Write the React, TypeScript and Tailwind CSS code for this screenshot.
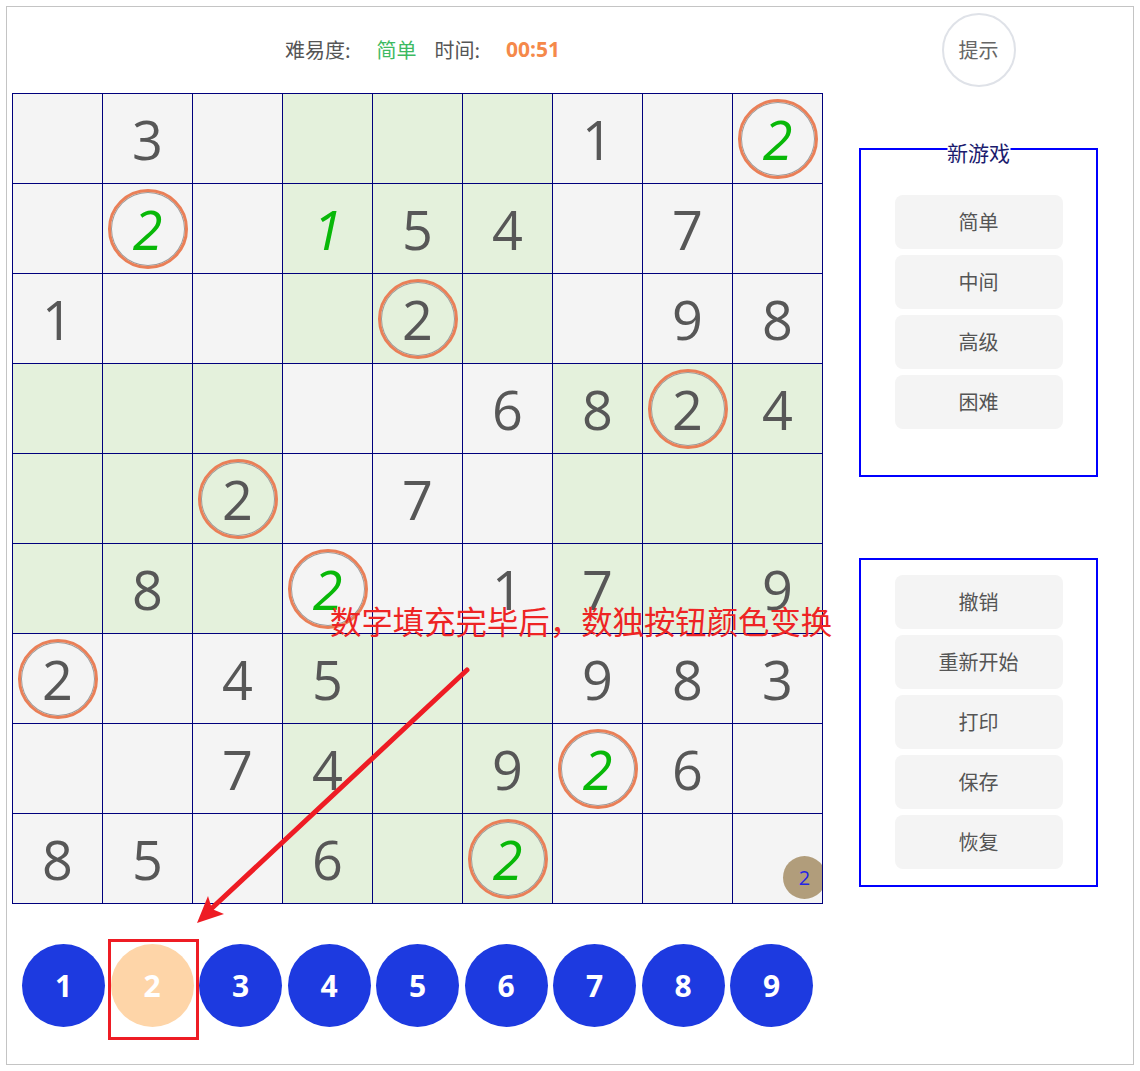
import React from "react"

type Cell = { v?: number; green?: boolean; ring?: boolean }

const rows: Cell[][] = [
  [{}, { v: 3 }, {}, {}, {}, {}, { v: 1 }, {}, { v: 2, green: true, ring: true }],
  [{}, { v: 2, green: true, ring: true }, {}, { v: 1, green: true }, { v: 5 }, { v: 4 }, {}, { v: 7 }, {}],
  [{ v: 1 }, {}, {}, {}, { v: 2, ring: true }, {}, {}, { v: 9 }, { v: 8 }],
  [{}, {}, {}, {}, {}, { v: 6 }, { v: 8 }, { v: 2, ring: true }, { v: 4 }],
  [{}, {}, { v: 2, ring: true }, {}, { v: 7 }, {}, {}, {}, {}],
  [{}, { v: 8 }, {}, { v: 2, green: true, ring: true }, {}, { v: 1 }, { v: 7 }, {}, { v: 9 }],
  [{ v: 2, ring: true }, {}, { v: 4 }, { v: 5 }, {}, {}, { v: 9 }, { v: 8 }, { v: 3 }],
  [{}, {}, { v: 7 }, { v: 4 }, {}, { v: 9 }, { v: 2, green: true, ring: true }, { v: 6 }, {}],
  [{ v: 8 }, { v: 5 }, {}, { v: 6 }, {}, { v: 2, green: true, ring: true }, {}, {}, {}],
]

const cjk = "font-['Noto_Sans_CJK_SC','Noto_Sans',sans-serif]"
const digitFont = "font-['Open_Sans','Noto_Sans',sans-serif]"

export default function App() {
  return (
    <div className="p-[6px] bg-white">
      <div className="relative w-[1128px] h-[1059px] border border-[#c4c4c4] flex pl-[5px] pt-[6px]">
        <div className="w-[811px]">
          <Header />
          <Board />
          <NumberPad />
        </div>
        <Side />
        <Annotation />
      </div>
    </div>
  )
}

function Header() {
  return (
    <div className={`h-[74px] flex items-center justify-center pl-[10px] text-[20px] text-[#555] ${cjk}`}>
      <span>难易度:</span>
      <span className="ml-[26px] text-[#3dba62]">简单</span>
      <span className="ml-[18px]">时间:</span>
      <span className={`ml-[26px] font-bold text-[21px] text-[#f5894a] ${digitFont}`}>00:51</span>
    </div>
  )
}

function Board() {
  return (
    <div className="mt-[6px] w-[811px] border-l border-t border-[#00007c] grid grid-cols-9">
      {rows.map((row, r) =>
        row.map((c, ci) => {
          const green = (Math.floor(r / 3) + Math.floor(ci / 3)) % 2 === 1
          const last = r === 8 && ci === 8
          return (
            <div
              key={`${r}-${ci}`}
              className={`relative overflow-hidden h-[90px] border-r border-b border-[#00007c] flex items-center justify-center ${green ? "bg-[#e4f1dc]" : "bg-[#f4f4f4]"}`}
            >
              {c.ring && (
                <span className="absolute w-[80px] h-[80px] rounded-full border-[3px] border-[#ea7f57] shadow-[inset_0_0_0_1px_#9a9a9a]" />
              )}
              {c.v !== undefined && (
                <span
                  className={`relative text-[54px] leading-none ${digitFont} ${c.green ? "italic text-[#08b808]" : "text-[#575757]"}`}
                >
                  {c.v}
                </span>
              )}
              {last && (
                <span className={`absolute right-[-4px] bottom-[4px] w-[43px] h-[43px] rounded-full bg-[#b19d7b] flex items-center justify-center text-[20px] text-[#2424e6] ${digitFont}`}>
                  2
                </span>
              )}
            </div>
          )
        })
      )}
    </div>
  )
}

function NumberPad() {
  return (
    <div className="mt-[40px] pl-[10px] flex gap-[5.5px]">
      {[1, 2, 3, 4, 5, 6, 7, 8, 9].map((n) => (
        <div
          key={n}
          className={`w-[83px] h-[83px] rounded-full flex items-center justify-center text-white font-bold text-[30px] ${digitFont} ${n === 2 ? "bg-[#fed5a8]" : "bg-[#1d3ae0]"}`}
        >
          {n}
        </div>
      ))}
    </div>
  )
}

function PanelButton({ label }: { label: string }) {
  return (
    <div className="w-[168px] h-[54px] mx-auto rounded-[8px] bg-[#f4f4f4] flex items-center justify-center text-[20px] text-[#555]">
      {label}
    </div>
  )
}

function Side() {
  return (
    <div className={`ml-[36px] w-[239px] ${cjk}`}>
      <div className="h-[74px] flex justify-center">
        <div className="w-[74px] h-[74px] rounded-full border-2 border-[#dfe2e8] flex items-center justify-center text-[20px] text-[#666]">
          提示
        </div>
      </div>
      <div className="relative mt-[61px] h-[329px] border-2 border-[#0000ff] pt-[45px] flex flex-col gap-[6px]">
        <span className="absolute left-1/2 -translate-x-1/2 -top-[8px] bg-white text-[21px] leading-none text-[#1b1b6e]">
          新游戏
        </span>
        {["简单", "中间", "高级", "困难"].map((t) => (
          <PanelButton key={t} label={t} />
        ))}
      </div>
      <div className="mt-[81px] h-[329px] border-2 border-[#0000ff] pt-[15px] flex flex-col gap-[6px]">
        {["撤销", "重新开始", "打印", "保存", "恢复"].map((t) => (
          <PanelButton key={t} label={t} />
        ))}
      </div>
    </div>
  )
}

function Annotation() {
  return (
    <>
      <span className={`absolute left-[323px] top-[598px] text-[31.4px] leading-none text-[#ee2424] whitespace-nowrap ${cjk}`}>
        数字填充完毕后，数独按钮颜色变换
      </span>
      <div className="absolute left-[101px] top-[932px] w-[91px] h-[101px] border-[3px] border-[#ee1c24]" />
      <svg className="absolute left-[-7px] top-[-7px] pointer-events-none" width="1140" height="1071">
        <line x1="467" y1="670" x2="211" y2="909" stroke="#ee1c24" strokeWidth="5" strokeLinecap="round" />
        <polygon points="197,923 208,896 212,909 224,914" fill="#ee1c24" />
      </svg>
    </>
  )
}
